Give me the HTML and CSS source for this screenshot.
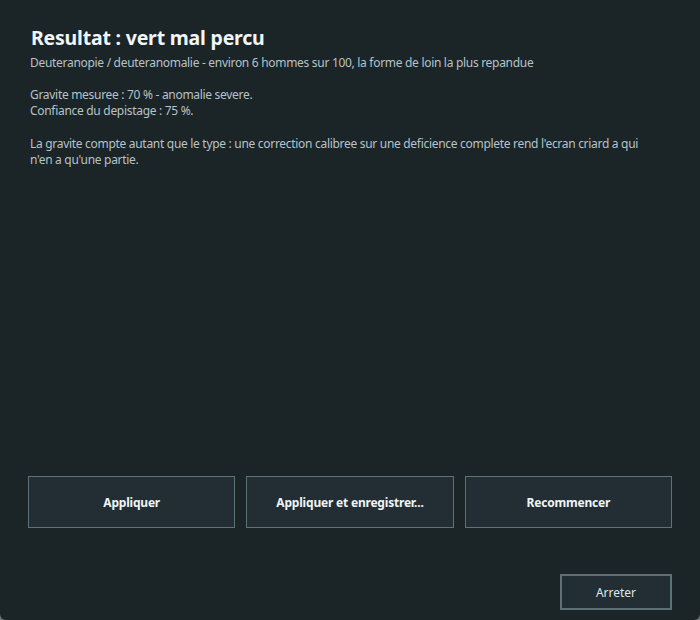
FILE: index.html
```html
<!DOCTYPE html>
<html lang="fr">
<head>
    <meta charset="UTF-8">
    <meta name="viewport" content="width=device-width, initial-scale=1.0">
    <title>Resultat</title>
    <link rel="stylesheet" href="styles.css">
</head>
<body>

    <div class="window">
        <div class="result">
            <h1>Resultat : vert mal percu</h1>
            <p class="subtitle">Deuteranopie / deuteranomalie - environ 6 hommes sur 100, la forme de loin la plus repandue</p>

            <p class="details">
                Gravite mesuree : 70 % - anomalie severe.<br>
                Confiance du depistage : 75 %.
            </p>

            <p class="details">
                La gravite compte autant que le type : une correction calibree sur une deficience complete rend l'ecran criard a qui n'en a qu'une partie.
            </p>
        </div>

        <div class="actions">
            <button class="action-btn">Appliquer</button>
            <button class="action-btn">Appliquer et enregistrer...</button>
            <button class="action-btn">Recommencer</button>
        </div>

        <div class="footer">
            <button class="stop-btn">Arreter</button>
        </div>
    </div>

</body>
</html>
```

FILE: styles.css
```css
html, body {
    margin: 0;
    height: 100%;
}
body {
    background-color: #6b7274;
    font-family: "Noto Sans", "Open Sans", sans-serif;
}
.window {
    box-sizing: border-box;
    height: 620px;
    display: flex;
    flex-direction: column;
    padding: 24px 28px 10px 28px;
    background-color: #1b2427;
    border-radius: 0 0 6px 6px;
}
.result {
    flex: 1;
    padding-left: 2px;
    color: #b6c3c7;
    font-size: 12px;
    line-height: 16px;
    letter-spacing: -0.3px;
}
.result h1 {
    margin: 0 0 0 1px;
    font-size: 19.5px;
    line-height: 28px;
    font-weight: bold;
    letter-spacing: -0.2px;
    color: #f1f6f9;
}
.subtitle {
    margin: 3px 0 0 0;
}
.details {
    margin: 16px 0 0 0;
    padding-right: 20px;
}
.details + .details {
    margin-top: 17px;
}
.actions {
    display: flex;
    gap: 11px;
}
.action-btn {
    flex: 1;
    height: 52px;
    background-color: #222e33;
    border: 1px solid #5d7275;
    color: #f0f4f6;
    font-family: inherit;
    font-size: 12px;
    font-weight: bold;
    letter-spacing: -0.2px;
}
.footer {
    display: flex;
    justify-content: flex-end;
    margin-top: 46px;
}
.stop-btn {
    width: 112px;
    height: 36px;
    background-color: #222e33;
    border: 2px solid #5d7275;
    color: #dfe7ea;
    font-family: inherit;
    font-size: 12px;
}
```
